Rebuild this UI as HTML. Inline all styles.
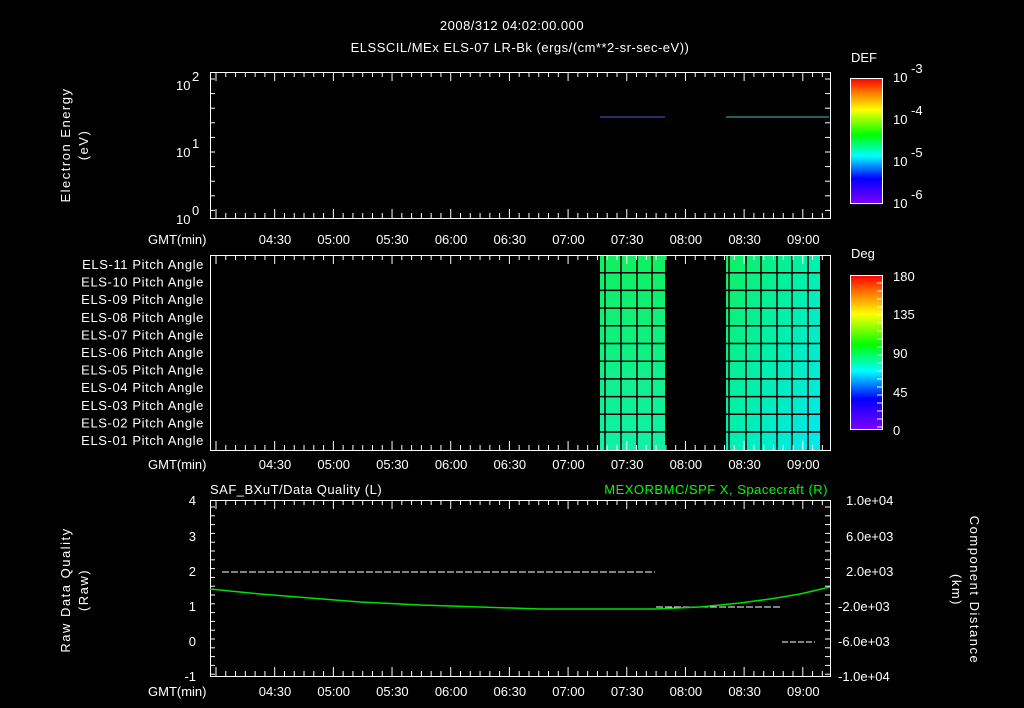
<!DOCTYPE html>
<html><head><meta charset="utf-8"><style>
html,body{margin:0;padding:0;background:#000;width:1024px;height:708px;overflow:hidden}
svg{display:block}
text{font-family:"Liberation Sans",sans-serif;fill:#fff;font-size:13px}
</style></head><body>
<svg id="s" width="1024" height="708" viewBox="0 0 1024 708" xmlns="http://www.w3.org/2000/svg">
<defs>
<linearGradient id="rb" x1="0" y1="1" x2="0" y2="0">
<stop offset="0" stop-color="#7f00ff"/><stop offset="0.2" stop-color="#0000ff"/><stop offset="0.38" stop-color="#00ffff"/><stop offset="0.55" stop-color="#00ff00"/><stop offset="0.75" stop-color="#ffff00"/><stop offset="0.88" stop-color="#ff8000"/><stop offset="1" stop-color="#ff0000"/>
</linearGradient>
<linearGradient id="g1" x1="0" y1="0" x2="0" y2="1"><stop offset="0" stop-color="#10f060"/><stop offset="1" stop-color="#10f0a8"/></linearGradient>
<linearGradient id="g2" x1="0" y1="0" x2="1" y2="1"><stop offset="0" stop-color="#10f060"/><stop offset="0.5" stop-color="#00f0b0"/><stop offset="1" stop-color="#00e8f0"/></linearGradient>
</defs>
<text x="512" y="30" text-anchor="middle" font-size="16" letter-spacing="0.5">2008/312 04:02:00.000</text>
<text x="520" y="52" text-anchor="middle" font-size="16" letter-spacing="0.5">ELSSCIL/MEx ELS-07 LR-Bk  (ergs/(cm**2-sr-sec-eV))</text>
<!-- panel1 -->
<rect x="210.5" y="72.5" width="620" height="146" fill="none" stroke="#fff"/>
<line x1="600" y1="117" x2="665" y2="117" stroke="#4060e0"/>
<line x1="726" y1="117" x2="829" y2="117" stroke="#40c0c0"/>
<g transform="translate(70,145) rotate(-90)"><text text-anchor="middle" font-size="15" letter-spacing="1.5">Electron Energy</text><text y="18" text-anchor="middle" font-size="15" letter-spacing="1.5">(eV)</text></g>
<text x="176" y="90" font-size="14">10</text><text x="192" y="81" font-size="9">2</text>
<text x="176" y="157" font-size="14">10</text><text x="192" y="148" font-size="9">1</text>
<text x="176" y="224" font-size="14">10</text><text x="192" y="215" font-size="9">0</text>
<text x="851" y="62" font-size="16">DEF</text>
<rect x="850.5" y="78.5" width="32" height="125" fill="url(#rb)" stroke="#fff"/>
<text x="893" y="82" font-size="16">10</text><text x="911" y="73" font-size="10">-3</text>
<text x="893" y="124" font-size="16">10</text><text x="911" y="115" font-size="10">-4</text>
<text x="893" y="166" font-size="16">10</text><text x="911" y="157" font-size="10">-5</text>
<text x="893" y="208" font-size="16">10</text><text x="911" y="199" font-size="10">-6</text>
<!-- panel2 -->
<rect x="600" y="255" width="65" height="195" fill="url(#g1)"/>
<rect x="726" y="255" width="94" height="195" fill="url(#g2)"/>
<g id="grid" stroke="#000" stroke-width="1.5"></g>
<rect x="210.5" y="255.5" width="620" height="195" fill="none" stroke="#fff"/>
<g id="pl" font-size="13"></g>
<text x="851" y="258" font-size="16">Deg</text>
<rect x="850.5" y="275.5" width="32" height="154" fill="url(#rb)" stroke="#fff"/>
<text x="893" y="281" font-size="16">180</text>
<text x="893" y="319" font-size="16">135</text>
<text x="893" y="358" font-size="16">90</text>
<text x="893" y="397" font-size="16">45</text>
<text x="893" y="435" font-size="16">0</text>
<!-- panel3 -->
<text x="210" y="494" font-size="15" letter-spacing="0.5">SAF_BXuT/Data Quality (L)</text>
<text x="828" y="494" font-size="15" letter-spacing="0.5" text-anchor="end" style="fill:#00ff00">MEXORBMC/SPF X, Spacecraft (R)</text>
<rect x="210.5" y="500.5" width="620" height="176" fill="none" stroke="#fff"/>
<line x1="222" y1="572" x2="655" y2="572" stroke="#fff" stroke-dasharray="7,2"/>
<line x1="656" y1="607" x2="780" y2="607" stroke="#fff" stroke-dasharray="7,2"/>
<line x1="782" y1="642" x2="815" y2="642" stroke="#fff" stroke-dasharray="6,2"/>
<polyline fill="none" stroke="#00e000" stroke-width="1.5" points="210,589 260,594 310,598 360,602 420,605 480,607 540,609 600,609 655,609 700,607 740,603 770,599 800,594 830,587"/>
<g transform="translate(70,590) rotate(-90)"><text text-anchor="middle" font-size="15" letter-spacing="1.5">Raw Data Quality</text><text y="18" text-anchor="middle" font-size="15" letter-spacing="1.5">(Raw)</text></g>
<g transform="translate(970,590) rotate(90)"><text text-anchor="middle" font-size="15" letter-spacing="1.5">Component Distance</text><text y="18" text-anchor="middle" font-size="15" letter-spacing="1.5">(km)</text></g>
<g font-size="14" text-anchor="end">
<text x="196" y="505">4</text><text x="196" y="541">3</text><text x="196" y="576">2</text><text x="196" y="611">1</text><text x="196" y="646">0</text><text x="196" y="681">-1</text>
</g>
<g font-size="13">
<text x="846" y="505">1.0e+04</text><text x="846" y="541">6.0e+03</text><text x="846" y="576">2.0e+03</text><text x="838" y="611">-2.0e+03</text><text x="838" y="646">-6.0e+03</text><text x="838" y="681">-1.0e+04</text>
</g>
</svg>
<script>
var s=document.getElementById('s'),NS='http://www.w3.org/2000/svg';
function el(t,a,p,txt){var e=document.createElementNS(NS,t);for(var k in a)e.setAttribute(k,a[k]);if(txt)e.textContent=txt;(p||s).appendChild(e);return e;}
var labs=['04:30','05:00','05:30','06:00','06:30','07:00','07:30','08:00','08:30','09:00'];
[[72,218],[255,450],[500,676]].forEach(function(p,pi){
 var ty=[244,469,696][pi];
 el('text',{x:148,y:ty,'font-size':14,fill:'#fff'},s,'GMT(min)');
 labs.forEach(function(l,i){el('text',{x:275+i*58.7,y:ty,'text-anchor':'middle','font-size':14,fill:'#fff'},s,l);});
 for(var x=216;x<830;x+=9.78){var n=Math.round((x-216)/9.78);var L=(n%6==0)?9:5;
  el('line',{x1:x,y1:p[0],x2:x,y2:p[0]+L,stroke:'#fff'});el('line',{x1:x,y1:p[1],x2:x,y2:p[1]-L,stroke:'#fff'});}
 if(pi!=1){for(var y=p[0]+7;y<p[1];y+=(pi==0?14.6:8.8)){el('line',{x1:210,y1:y,x2:215,y2:y,stroke:'#fff'});el('line',{x1:825,y1:y,x2:830,y2:y,stroke:'#fff'});}}
});
var g=document.getElementById('grid');
for(var i=1;i<11;i++){var y=255+i*17.7;el('line',{x1:600,y1:y,x2:665,y2:y},g);el('line',{x1:726,y1:y,x2:820,y2:y},g);}
[605,621,637,652].forEach(function(x){el('line',{x1:x,y1:255,x2:x,y2:450},g);});
[729,746,761,777,792,808].forEach(function(x){el('line',{x1:x,y1:255,x2:x,y2:450},g);});
var pl=document.getElementById('pl');
for(var i=0;i<11;i++){var n=11-i;el('text',{x:204,y:269+i*17.6,'text-anchor':'end','font-size':13,'letter-spacing':'0.6',fill:'#fff'},pl,'ELS-'+(n<10?'0':'')+n+' Pitch Angle');}
for(var y=283;y<430;y+=8){el('line',{x1:877,y1:y,x2:882,y2:y,stroke:'#fff'});}
</script>
</body></html>
